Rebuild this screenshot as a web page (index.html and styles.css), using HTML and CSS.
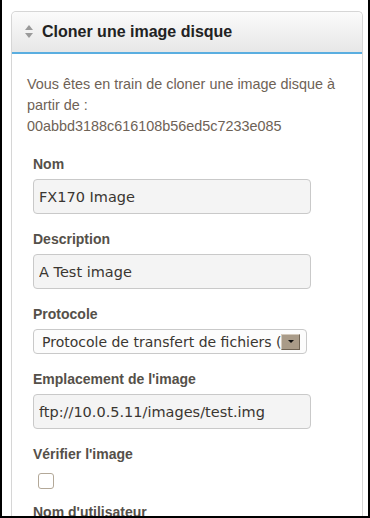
FILE: index.html
```html
<!DOCTYPE html>
<html lang="fr">
<head>
    <meta charset="UTF-8">
    <meta name="viewport" content="width=device-width, initial-scale=1.0">
    <title>Cloner une image disque</title>
    <link rel="stylesheet" href="styles.css">
</head>
<body>
    <div class="frame">
        <div class="panel">
            <div class="panel-header">
                <svg class="sort-icon" width="8" height="14" viewBox="0 0 8 14">
                    <path d="M4 0 L8 5 L0 5 Z" fill="#9a9a9a"/>
                    <path d="M0 8 L8 8 L4 13 Z" fill="#9a9a9a"/>
                </svg>
                <h2>Cloner une image disque</h2>
            </div>
            <div class="panel-body">
                <p class="intro">Vous êtes en train de cloner une image disque à partir de :<br>00abbd3188c616108b56ed5c7233e085</p>

                <div class="form">
                    <div class="field">
                        <label for="nom">Nom</label>
                        <input type="text" id="nom" value="FX170 Image">
                    </div>
                    <div class="field">
                        <label for="description">Description</label>
                        <input type="text" id="description" value="A Test image">
                    </div>
                    <div class="field">
                        <label>Protocole</label>
                        <div class="select">
                            <span class="select-text">Protocole de transfert de fichiers (FTP)</span>
                            <span class="select-btn"></span>
                        </div>
                    </div>
                    <div class="field">
                        <label for="emplacement">Emplacement de l'image</label>
                        <input type="text" id="emplacement" value="ftp://10.0.5.11/images/test.img">
                    </div>
                    <div class="field">
                        <label>Vérifier l'image</label>
                        <span class="checkbox"></span>
                    </div>
                    <div class="field">
                        <label for="utilisateur">Nom d'utilisateur</label>
                        <input type="text" id="utilisateur">
                    </div>
                </div>
            </div>
        </div>
    </div>
</body>
</html>
```

FILE: styles.css
```css
html, body {
    margin: 0;
    padding: 0;
    background-color: #fff;
    overflow: hidden;
}

.frame {
    box-sizing: border-box;
    height: 518px;
    overflow: hidden;
    border: 2px solid #000;
    border-top: none;
    padding: 11px 5px 0 9px;
    font-family: "Liberation Sans", Arial, sans-serif;
}

.panel {
    border: 1px solid #d6d6d6;
    border-bottom: none;
    border-radius: 5px 5px 0 0;
    background-color: #fff;
    min-height: 600px;
}

.panel-header {
    display: flex;
    align-items: center;
    height: 40px;
    padding-left: 13px;
    border-radius: 5px 5px 0 0;
    border-bottom: 2px solid #5aaee0;
    background: linear-gradient(#fbfbfb, #e7e7e7);
}

.sort-icon {
    margin-right: 9px;
}

.panel-header h2 {
    margin: 0;
    font-size: 16px;
    font-weight: bold;
    color: #222;
}

.panel-body {
    padding: 20px 15px 0 15px;
}

.intro {
    margin: 0 0 18px 0;
    font-size: 14.4px;
    line-height: 21px;
    color: #6e6256;
}

.form {
    padding-left: 6px;
}

.field {
    margin-bottom: 16px;
}

.field label {
    display: block;
    font-size: 14px;
    font-weight: bold;
    line-height: 18px;
    color: #555049;
    margin-bottom: 6px;
}

.field input[type="text"] {
    box-sizing: border-box;
    display: block;
    width: 278px;
    height: 35px;
    margin: 0;
    padding: 0 5px;
    border: 1px solid #c9c9c9;
    border-radius: 4px;
    background-color: #f4f4f4;
    font-family: "DejaVu Sans", sans-serif;
    font-size: 14.5px;
    color: #3a3631;
}

.select {
    box-sizing: border-box;
    display: flex;
    align-items: center;
    width: 274px;
    height: 25px;
    padding: 0 6px 0 8px;
    border: 1px solid #c9c9c9;
    border-radius: 4px;
    background-color: #fcfcfc;
}

.select-text {
    flex: 1;
    overflow: hidden;
    white-space: nowrap;
    font-family: "DejaVu Sans", sans-serif;
    font-size: 14px;
    color: #3a3631;
}

.select-btn {
    position: relative;
    flex: none;
    box-sizing: border-box;
    width: 19px;
    height: 16px;
    background-color: #a99b88;
    border: 1px solid;
    border-color: #d4cabc #6f6353 #6f6353 #d4cabc;
}

.select-btn::after {
    content: "";
    position: absolute;
    left: 6px;
    top: 5px;
    border-left: 3px solid transparent;
    border-right: 3px solid transparent;
    border-top: 3px solid #111;
}

.checkbox {
    display: block;
    box-sizing: border-box;
    width: 16px;
    height: 16px;
    margin: 10px 0 0 5px;
    border: 1px solid #b3a898;
    border-radius: 3px;
    background-color: #fff;
}

.field:has(.checkbox) {
    margin-bottom: 14px;
}
```
